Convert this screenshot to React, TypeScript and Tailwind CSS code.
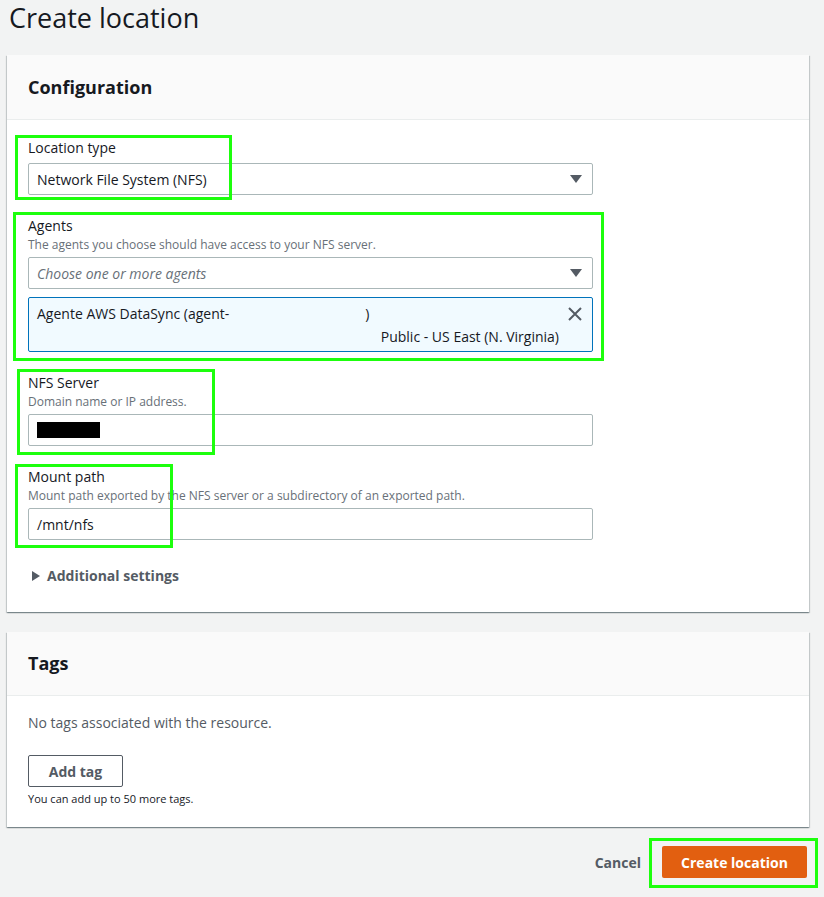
import React from 'react';

const font = { fontFamily: '"Open Sans", "Noto Sans", Arial, sans-serif' };

function Caret() {
  return (
    <svg width="12" height="8" viewBox="0 0 12 8" className="shrink-0">
      <path d="M0 0h12L6 8z" fill="#545b64" />
    </svg>
  );
}

function Field({ label, desc, children }: { label: string; desc?: string; children: React.ReactNode }) {
  return (
    <div>
      <div className="text-[14px] leading-[20px] text-[#16191f]">{label}</div>
      {desc && <div className="text-[12px] leading-[16px] text-[#687078] mt-[1px]">{desc}</div>}
      <div className={desc ? 'mt-[4px]' : 'mt-[5px]'}>{children}</div>
    </div>
  );
}

function Select({ value, placeholder }: { value?: string; placeholder?: string }) {
  return (
    <div className="h-[32px] w-[565px] border border-[#aab7b8] rounded-[2px] bg-white flex items-center justify-between pl-[8px] pr-[10px]">
      {value ? (
        <span className="text-[14px] text-[#16191f]">{value}</span>
      ) : (
        <span className="text-[14px] italic text-[#687078]">{placeholder}</span>
      )}
      <Caret />
    </div>
  );
}

// green annotation frames drawn over the form
function Box({ x, y, w, h }: { x: number; y: number; w: number; h: number }) {
  return (
    <div
      className="absolute border-[3px] border-[#1dff0d] pointer-events-none"
      style={{ left: x, top: y, width: w, height: h }}
    />
  );
}

const cardShadow =
  'bg-white shadow-[0_1px_1px_0_rgba(0,28,36,0.3),1px_1px_1px_0_rgba(0,28,36,0.15),-1px_1px_1px_0_rgba(0,28,36,0.15)]';

export default function App() {
  return (
    <div className="relative w-[824px] h-[897px] bg-[#f2f3f3] overflow-hidden" style={font}>
      <div className="pl-[7px] pr-[15px]">
        <h1 className="text-[27px] leading-[36px] pl-[2px] text-[#16191f] font-normal">Create location</h1>

        {/* Configuration */}
        <div className={`mt-[19px] ${cardShadow}`}>
          <div className="h-[65px] bg-[#fafafa] border-b border-[#eaeded] flex items-center px-[21px]">
            <h2 className="text-[18px] font-bold text-[#16191f]">Configuration</h2>
          </div>
          <div className="px-[21px] pt-[18px] pb-[26px] flex flex-col gap-[21px]">
            <Field label="Location type">
              <Select value="Network File System (NFS)" />
            </Field>

            <Field label="Agents" desc="The agents you choose should have access to your NFS server.">
              <Select placeholder="Choose one or more agents" />
              <div className="mt-[8px] w-[565px] h-[55px] border border-[#0073bb] rounded-[2px] bg-[#f1faff] relative px-[8px] pt-[5px]">
                <div className="flex text-[14px] text-[#16191f]">
                  <span>Agente AWS DataSync (agent-</span>
                  <span className="ml-[136px]">)</span>
                </div>
                <div className="text-right pr-[25px] mt-[2px] text-[14px] text-[#16191f]">Public - US East (N. Virginia)</div>
                <svg width="14" height="14" viewBox="0 0 14 14" className="absolute right-[10px] top-[9px]">
                  <path d="M1 1l12 12M13 1L1 13" stroke="#545b64" strokeWidth="2" />
                </svg>
              </div>
            </Field>

            <Field label="NFS Server" desc="Domain name or IP address.">
              <div className="h-[32px] w-[565px] border border-[#aab7b8] rounded-[2px] bg-white flex items-center pl-[8px]">
                <div className="w-[63px] h-[16px] bg-black" />
              </div>
            </Field>

            <Field label="Mount path" desc="Mount path exported by the NFS server or a subdirectory of an exported path.">
              <div className="h-[32px] w-[565px] border border-[#aab7b8] rounded-[2px] bg-white flex items-center pl-[8px]">
                <span className="text-[14px] text-[#16191f]">/mnt/nfs</span>
              </div>
            </Field>

            <div className="flex items-center gap-[7px] mt-[5px] pl-[4px] leading-[20px]">
              <svg width="8" height="10" viewBox="0 0 8 10">
                <path d="M0 0l8 5-8 5z" fill="#545b64" />
              </svg>
              <span className="text-[14px] font-bold text-[#545b64]">Additional settings</span>
            </div>
          </div>
        </div>

        {/* Tags */}
        <div className={`mt-[20px] ${cardShadow}`}>
          <div className="h-[64px] bg-[#fafafa] border-b border-[#eaeded] flex items-center px-[21px]">
            <h2 className="text-[18px] font-bold text-[#16191f]">Tags</h2>
          </div>
          <div className="px-[21px] pt-[17px] pb-[20px]">
            <div className="text-[14px] leading-[20px] text-[#545b64]">No tags associated with the resource.</div>
            <button className="mt-[22px] h-[32px] w-[95px] border border-[#545b64] rounded-[2px] bg-white text-[14px] font-bold text-[#545b64] block">
              Add tag
            </button>
            <div className="mt-[4px] text-[11px] leading-[16px] text-[#16191f]">You can add up to 50 more tags.</div>
          </div>
        </div>

        {/* Footer */}
        <div className="flex justify-end items-center gap-[21px] mt-[19px] pr-[2px]">
          <span className="text-[14px] font-bold text-[#545b64]">Cancel</span>
          <button className="h-[32px] w-[145px] rounded-[2px] bg-[#e25f10] text-white text-[14px] font-bold">
            Create location
          </button>
        </div>
      </div>

      <Box x={15} y={135} w={217} h={65} />
      <Box x={13} y={212} w={591} h={149} />
      <Box x={17} y={369} w={198} h={86} />
      <Box x={15} y={464} w={158} h={84} />
      <Box x={649} y={838} w={169} h={50} />
    </div>
  );
}
